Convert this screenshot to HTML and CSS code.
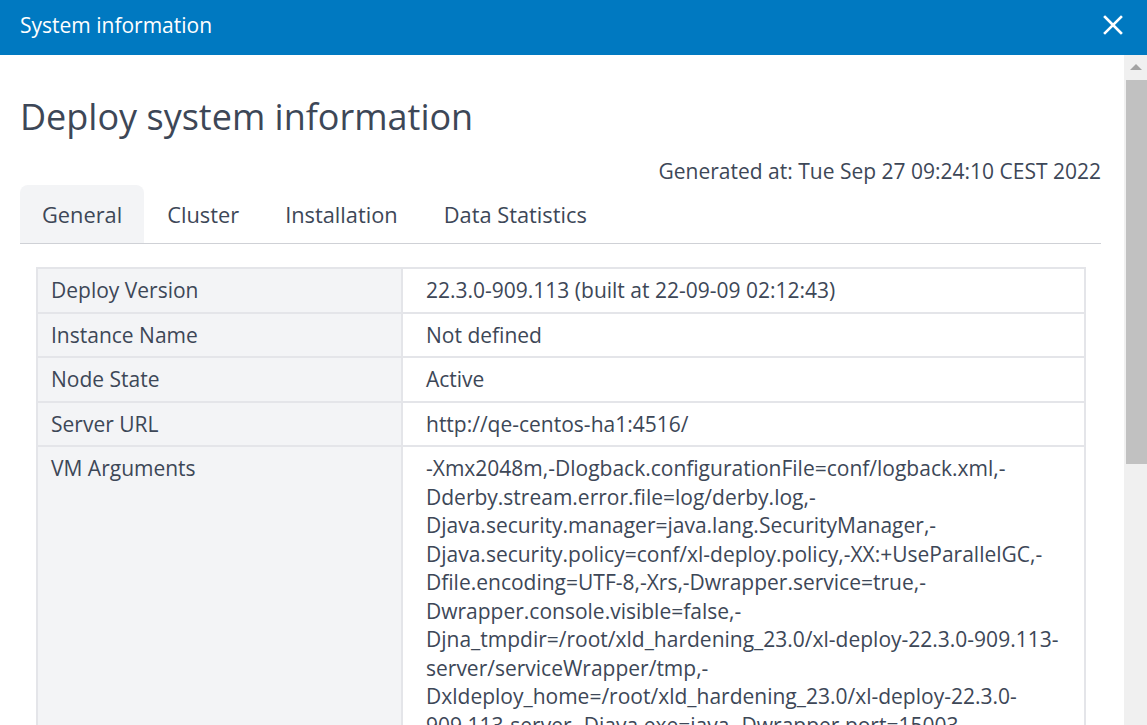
FILE: index.html
```html
<!DOCTYPE html>
<html>
<head>
<meta charset="utf-8">
<title>System information</title>
<link rel="stylesheet" href="styles.css">
</head>
<body>
<div class="dialog">
  <header class="dialog-header">
    <span class="dialog-title">System information</span>
    <button class="close-btn" aria-label="Close">
      <svg width="20" height="20" viewBox="0 0 20 20"><path d="M2 2 L18 18 M18 2 L2 18" stroke="#fff" stroke-width="2.6" stroke-linecap="square" fill="none"/></svg>
    </button>
  </header>
  <div class="dialog-body">
    <div class="content">
      <h1 class="page-title">Deploy system information</h1>
      <div class="generated">Generated at: Tue Sep 27 09:24:10 CEST 2022</div>
      <nav class="tabs">
        <div class="tab active">General</div>
        <div class="tab">Cluster</div>
        <div class="tab">Installation</div>
        <div class="tab">Data Statistics</div>
      </nav>
      <table class="info-table">
        <tr><td class="key">Deploy Version</td><td class="val">22.3.0-909.113 (built at 22-09-09 02:12:43)</td></tr>
        <tr><td class="key">Instance Name</td><td class="val">Not defined</td></tr>
        <tr><td class="key">Node State</td><td class="val">Active</td></tr>
        <tr><td class="key">Server URL</td><td class="val">http://qe-centos-ha1:4516/</td></tr>
        <tr><td class="key">VM Arguments</td><td class="val">-Xmx2048m,-Dlogback.configurationFile=conf/logback.xml,-Dderby.stream.error.file=log/derby.log,-Djava.security.manager=java.lang.SecurityManager,-Djava.security.policy=conf/xl-deploy.policy,-XX:+UseParallelGC,-Dfile.encoding=UTF-8,-Xrs,-Dwrapper.service=true,-Dwrapper.console.visible=false,-Djna_tmpdir=/root/xld_hardening_23.0/xl-deploy-22.3.0-909.113-server/serviceWrapper/tmp,-Dxldeploy_home=/root/xld_hardening_23.0/xl-deploy-22.3.0-909.113-server,-Djava.exe=java,-Dwrapper.port=15003,-Dwrapper.jvm.port.min=31000,-Dwrapper.jvm.port.max=31999,-Dwrapper.pid=1234,-Dwrapper.version=3.5.46,-Dwrapper.native_library=wrapper,-Dwrapper.arch=x86,-Dwrapper.cpu.timeout=10,-Dwrapper.jvmid=1</td></tr>
      </table>
    </div>
    <div class="scrollbar">
      <div class="scroll-up"></div>
      <div class="scroll-thumb"></div>
    </div>
  </div>
</div>
</body>
</html>
```
FILE: styles.css
```css
html, body {
  margin: 0;
  padding: 0;
  background: #fff;
}
body {
  font-family: "Open Sans", "Noto Sans", sans-serif;
  color: #3d4757;
  width: 1147px;
  height: 725px;
  overflow: hidden;
}
.dialog {
  display: flex;
  flex-direction: column;
  height: 725px;
}
.dialog-header {
  height: 55px;
  box-sizing: border-box;
  background: #0079c1;
  display: flex;
  align-items: center;
  justify-content: space-between;
  padding: 0 24px 6px 20px;
  flex: none;
}
.dialog-title {
  color: #fff;
  font-size: 21px;
}
.close-btn {
  background: none;
  border: 0;
  padding: 0;
  width: 20px;
  height: 20px;
  display: flex;
}
.dialog-body {
  flex: 1;
  display: flex;
  overflow: hidden;
}
.content {
  flex: 1;
  padding: 37px 23px 0 20px;
  overflow: hidden;
}
.page-title {
  margin: 0;
  font-size: 36px;
  font-weight: 400;
  line-height: 49px;
  color: #3d4757;
}
.generated {
  text-align: right;
  font-size: 21px;
  line-height: 27px;
  margin-top: 17px;
}
.tabs {
  display: flex;
  border-bottom: 1px solid #cfd1d6;
  height: 58px;
}
.tab {
  padding: 0 23px;
  font-size: 21.8px;
  font-weight: 500;
  display: flex;
  align-items: center;
  border-radius: 8px 8px 0 0;
}
.tab.active {
  background: #f3f4f6;
  padding: 0 22px;
}
.info-table {
  margin: 23px 15px 0 16px;
  width: calc(100% - 31px);
  border-collapse: collapse;
  font-size: 21px;
  line-height: 28.5px;
}
.info-table td {
  border: 2px solid #e4e5e9;
  vertical-align: top;
  padding: 7px 16px 7px 23px;
}
.info-table td.key {
  background: #f3f4f6;
  width: 334px;
  padding-left: 13px;
}
.info-table td.val {
  background: #fff;
}
.scrollbar {
  width: 23px;
  flex: none;
  background: #f0f0f0;
  display: flex;
  flex-direction: column;
  align-items: flex-end;
}
.scroll-up {
  width: 0;
  height: 0;
  border-left: 6px solid transparent;
  border-right: 6px solid transparent;
  border-bottom: 6px solid #a3a3a3;
  margin: 9px 5px 10px 0;
}
.scroll-thumb {
  width: 21px;
  height: 384px;
  background: #c1c1c1;
}
```
